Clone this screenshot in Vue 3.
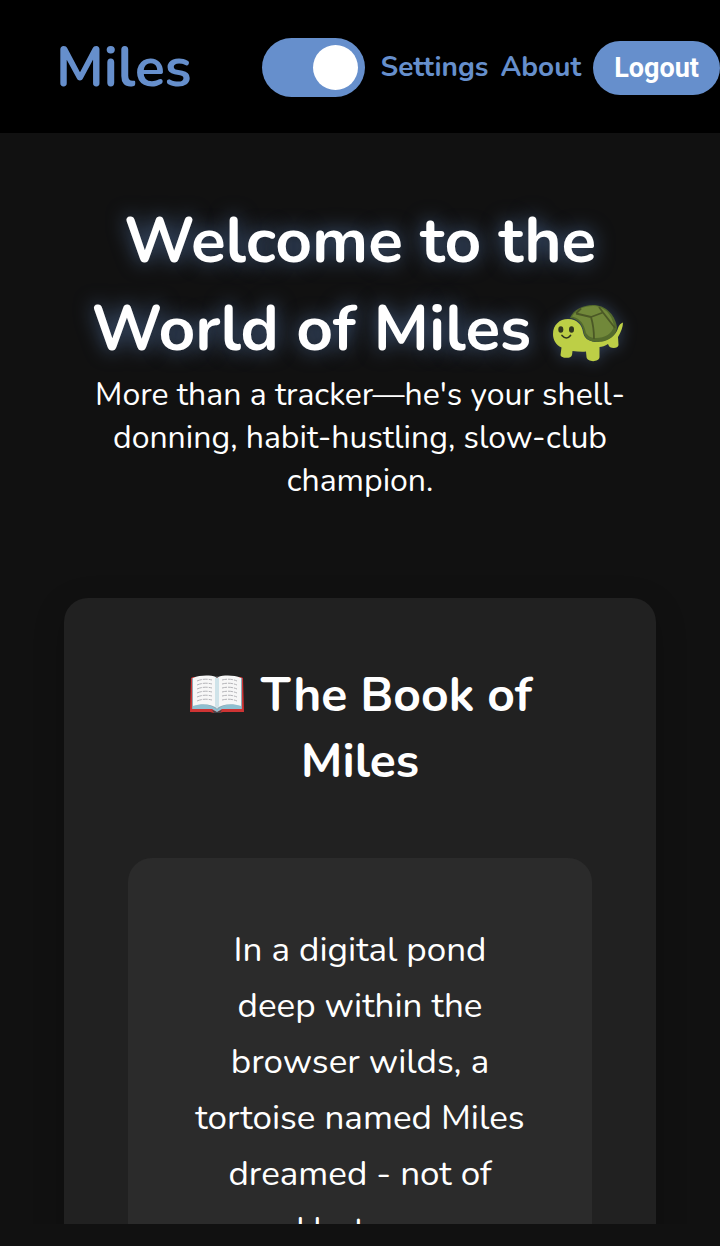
<script setup>
import { ref } from 'vue'

const darkMode = ref(true)
</script>

<template>
  <div class="page">
    <header class="nav">
      <a class="brand" href="#">Miles</a>
      <nav class="links">
        <input v-model="darkMode" class="switch" type="checkbox" role="switch" aria-label="Dark mode" />
        <a class="link" href="#settings">Settings</a>
        <a class="link" href="#about">About</a>
        <button class="logout" type="button">Logout</button>
      </nav>
    </header>

    <main class="content">
      <section class="hero">
        <h1>
          Welcome to the World of Miles
          <svg class="turtle" viewBox="0 0 72 58" role="img" aria-label="turtle">
            <path
              fill="#bdcf46"
              d="M16 15C25 15 30 21 31 28C32 34 36 37 43 38L56 35C62 32 65 28 66 24C67 21 69 19 71 18.500C71 23 69 28 66 33L66.500 41C66.500 45 57 45 56.500 41L56 40C53 42 50 43 47.500 43L47.500 53C47.500 58.500 35 58.500 34.500 53L34 47.500C30 48 25 47.500 20.500 47L20 51C19.500 55 9 54.500 8.500 51L9.500 43.500C4 41 1 36 1 30C1 21 7.500 15 16 15Z"
            />
            <path
              fill="#546b2c"
              d="M18 14C21 6 31 1 41 1C53 1 63 10 65 23C65 31 57 38 46 38C38 38 34 35 32 30C31 21 27 15 18 14Z"
            />
            <path
              fill="#71883a"
              d="M20 12.500C24 6 32 2 41 2C52 2 60 10 62 22C60 30 53 34 44 34C39 34 36 32 34 29C32 20 29 15 20 12.500Z"
            />
            <path
              fill="none"
              stroke="#4b5826"
              stroke-width="1.800"
              stroke-linejoin="round"
              d="M24 9.500L39 13L51 8.500L63 24M39 13Q42 23 42 35M51 8.500L47 3M24 9.500L29 4.500"
            />
            <ellipse cx="8.800" cy="25.500" rx="2.500" ry="3.200" fill="#30351f" />
            <ellipse cx="19.500" cy="25.500" rx="2.500" ry="3.200" fill="#30351f" />
            <path d="M10 31.500Q14.500 36.500 18.500 31.500" fill="none" stroke="#30351f" stroke-width="1.700" stroke-linecap="round" />
          </svg>
        </h1>
        <p>More than a tracker—he's your shell-donning, habit-hustling, slow-club champion.</p>
      </section>

      <section class="card">
        <h2>
          <svg class="book" viewBox="0 0 54 38" role="img" aria-label="open book">
            <path fill="#cf3434" d="M1 3L3 2H51L53 3L54 37H33L29 38H24L20 37H0Z" />
            <path fill="#8fa9b5" d="M2 3H52V34H31L27 37L23 34H2Z" />
            <path fill="#8ebfd0" d="M3 31C13 28 22 30 27 35C32 30 41 28 51 31V34H32L27 37L22 34H3Z" />
            <path fill="#f7f7f7" d="M3 3C10 0 20 0 26 2L27 3L28 2C34 0 44 0 51 3V31C42 28 33 29 27 33C21 29 12 28 3 31Z" />
            <path fill="#cfe3e9" d="M25 2L27 3L29 2V31L27 34L25 31Z" />
            <path fill="#41474a" d="M25 1L27 3L29 1ZM22 35L27 37L32 35L30 38H24Z" />
            <path
              fill="none"
              stroke="#b4b4b8"
              stroke-width="1"
              stroke-dasharray="5 1"
              d="M7 6Q14 3 22 5M7 10Q14 7 22 9M7 14Q14 11 22 13M7 18Q14 15 22 17M7 22Q14 19 22 21M7 26Q14 23 22 25M32 5Q40 3 47 6M32 9Q40 7 47 10M32 13Q40 11 47 14M32 17Q40 15 47 18M32 21Q40 19 47 22M32 25Q40 23 47 26"
            />
          </svg>
          The Book of Miles
        </h2>
        <div class="story">
          <p>In a digital pond deep within the browser wilds, a tortoise named Miles dreamed - not of speed but purpose.</p>
        </div>
      </section>
    </main>

    <div class="bottom-bar"></div>
  </div>
</template>

<style>
body {
  background: #111;
}
</style>

<style scoped>
.page {
  display: flex;
  flex-direction: column;
  height: 100vh;
  overflow: hidden;
  background: #111;
  color: #fff;
  font-family: Nunito, Lato, "Open Sans", sans-serif;
}

.nav {
  display: flex;
  flex: none;
  align-items: center;
  justify-content: space-between;
  box-sizing: border-box;
  height: 133px;
  padding: 2px 0 0 56px;
  background: #000;
}

.brand {
  color: #668fcc;
  font-size: 55px;
  font-weight: 700;
  line-height: 76px;
  text-decoration: none;
}

.links {
  display: flex;
  align-items: center;
  gap: 12px;
}

.switch {
  appearance: none;
  display: flex;
  align-items: center;
  justify-content: flex-end;
  box-sizing: border-box;
  width: 103px;
  height: 59px;
  margin: 0 4px 0 0;
  padding: 0 7px;
  border-radius: 30px;
  background: #668fcc;
}

.switch::before {
  content: "";
  width: 45px;
  height: 45px;
  border-radius: 50%;
  background: #fff;
}

.switch:not(:checked) {
  justify-content: flex-start;
}

.link {
  padding-bottom: 2px;
  color: #668fcc;
  font-size: 28px;
  font-weight: 700;
  line-height: 38px;
  text-decoration: none;
}

.logout {
  height: 54px;
  padding: 0 21px;
  border: 0;
  border-radius: 27px;
  background: #668fcc;
  color: #fff;
  font: 700 27px/32px Roboto, sans-serif;
}

.content {
  flex: 1;
  min-height: 0;
  overflow: hidden;
  padding: 64px 64px 0;
}

.hero {
  text-align: center;
}

h1,
h2,
p {
  margin: 0;
}

h1 {
  font-size: 64px;
  font-weight: 700;
  line-height: 88px;
  text-shadow: 0 0 20px rgba(102, 143, 204, 0.65);
}

.turtle {
  width: 72px;
  height: 58px;
  margin: 0 5px -12px 3px;
  overflow: visible;
  filter: drop-shadow(0 0 8px rgba(102, 143, 204, 0.4));
}

.hero p {
  font-size: 32px;
  line-height: 43px;
}

.card {
  margin-top: 96px;
  padding: 64px;
  border-radius: 24px;
  background: #212121;
  box-shadow: 0 8px 32px rgba(0, 0, 0, 0.2);
  text-align: center;
}

h2 {
  font-size: 48px;
  font-weight: 700;
  line-height: 66px;
}

.book {
  width: 54px;
  height: 38px;
  margin: 0 4px -2px 2px;
}

.story {
  margin-top: 64px;
  padding: 64px;
  border-radius: 24px;
  background: #2b2b2b;
}

.story p {
  font-size: 35px;
  line-height: 56px;
}

.bottom-bar {
  flex: none;
  height: 22px;
  background: #111;
}
</style>
